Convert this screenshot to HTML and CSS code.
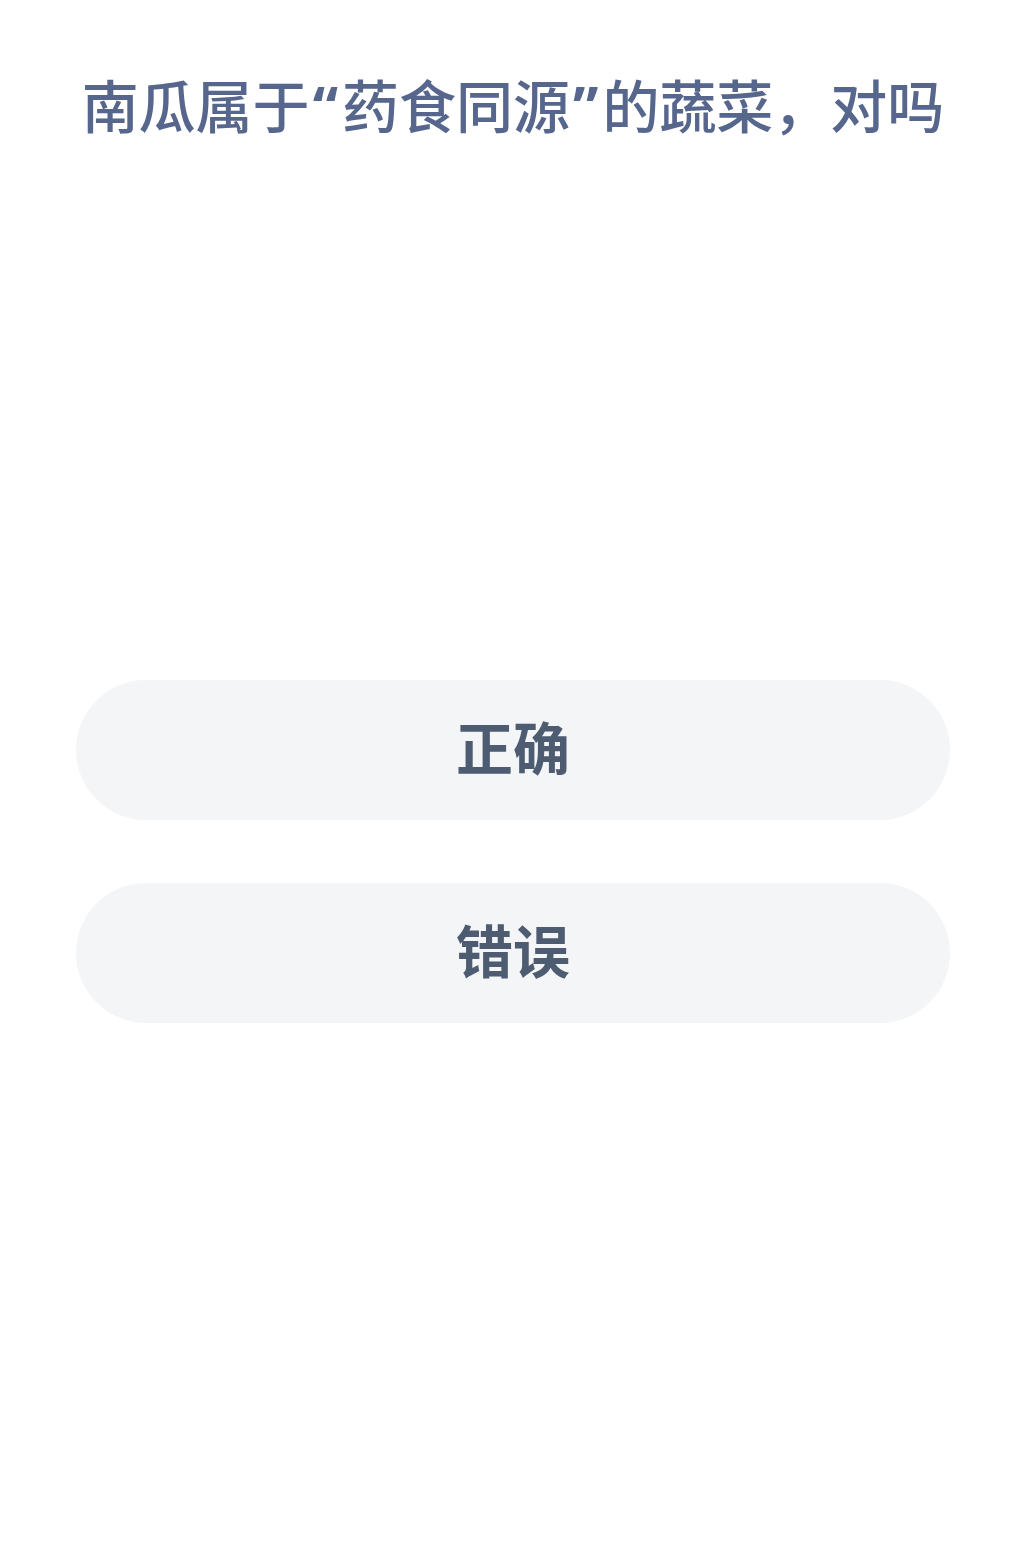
FILE: index.html
```html
<!DOCTYPE html>
<html lang="zh-CN">
<head>
<meta charset="utf-8">
<title>南瓜属于“药食同源”的蔬菜，对吗</title>
<link rel="stylesheet" href="styles.css">
</head>
<body>
<main class="page">
  <h1 class="question">南瓜属于<span class="quote">“</span>药食同源<span class="quote">”</span>的蔬菜，对吗</h1>
  <div class="options">
    <button class="option">正确</button>
    <button class="option">错误</button>
  </div>
</main>
</body>
</html>
```
FILE: styles.css
```css
html, body {
  margin: 0;
  padding: 0;
  background: #ffffff;
}
body {
  font-family: "Noto Sans CJK SC", "Noto Sans", sans-serif;
}
.page {
  width: 1027px;
  min-height: 1555px;
  box-sizing: border-box;
  padding: 70px 77px 0 76px;
  display: flex;
  flex-direction: column;
}
.question {
  margin: 0;
  font-family: "Noto Sans", "Noto Sans CJK SC", sans-serif;
  font-size: 57px;
  line-height: 72px;
  font-weight: 500;
  color: #56668c;
  text-align: center;
  white-space: nowrap;
}
.quote {
  font-weight: 700;
  margin: 0 4px 0 3px;
}
.options {
  margin-top: 538px;
  display: flex;
  flex-direction: column;
  gap: 63px;
}
.option {
  height: 140px;
  border: none;
  border-radius: 70px;
  background: #f3f5f7;
  color: #4e5c72;
  font-family: inherit;
  font-size: 57px;
  font-weight: 700;
  padding: 0 0 10px 0;
  width: 100%;
}
```
